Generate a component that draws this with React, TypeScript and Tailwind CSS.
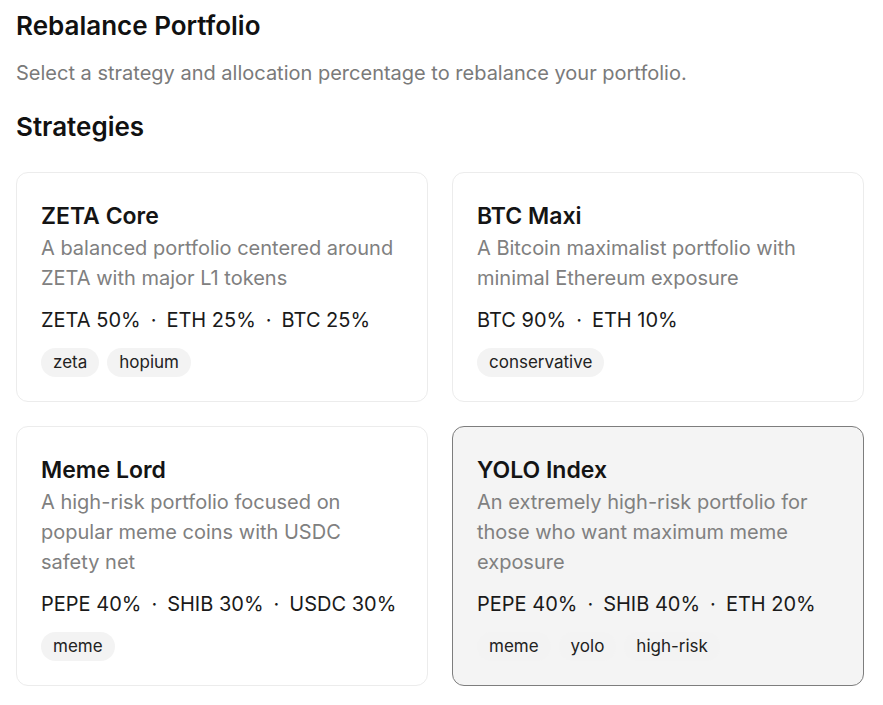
import React from "react";

type Strategy = {
  name: string;
  description: string;
  allocations: string[];
  tags: string[];
  selected?: boolean;
};

const strategies: Strategy[] = [
  {
    name: "ZETA Core",
    description: "A balanced portfolio centered around ZETA with major L1 tokens",
    allocations: ["ZETA 50%", "ETH 25%", "BTC 25%"],
    tags: ["zeta", "hopium"],
  },
  {
    name: "BTC Maxi",
    description: "A Bitcoin maximalist portfolio with minimal Ethereum exposure",
    allocations: ["BTC 90%", "ETH 10%"],
    tags: ["conservative"],
  },
  {
    name: "Meme Lord",
    description: "A high-risk portfolio focused on popular meme coins with USDC safety net",
    allocations: ["PEPE 40%", "SHIB 30%", "USDC 30%"],
    tags: ["meme"],
  },
  {
    name: "YOLO Index",
    description: "An extremely high-risk portfolio for those who want maximum meme exposure",
    allocations: ["PEPE 40%", "SHIB 40%", "ETH 20%"],
    tags: ["meme", "yolo", "high-risk"],
    selected: true,
  },
];

function Card({ s }: { s: Strategy }) {
  return (
    <div
      className={
        s.selected
          ? "rounded-xl border border-[#7d7d7d] bg-[#f4f4f4] px-6 pt-[27px] pb-6 flex flex-col"
          : "rounded-xl border border-[#ececec] bg-white px-6 pt-[27px] pb-6 flex flex-col"
      }
    >
      <div className="text-[23px] leading-[32px] font-semibold text-[#141414]">{s.name}</div>
      <div className="mt-[1px] text-[20px] leading-[30px] text-[#808080]">{s.description}</div>
      <div className="mt-[13px] text-[20px] leading-[28px] text-[#1a1a1a] whitespace-nowrap">
        {s.allocations.map((a, i) => (
          <React.Fragment key={a}>
            {i > 0 && <span className="mx-[10px]">·</span>}
            {a}
          </React.Fragment>
        ))}
      </div>
      <div className="mt-[14px] flex gap-2">
        {s.tags.map((t) => (
          <span
            key={t}
            className="rounded-full bg-[#f3f3f3] px-3 py-1 text-[17px] leading-[21px] text-[#222]"
          >
            {t}
          </span>
        ))}
      </div>
    </div>
  );
}

export default function App() {
  return (
    <div
      className="w-[880px] bg-white px-4 pt-[10px] pb-6"
      style={{ fontFamily: "Inter, 'Noto Sans', sans-serif" }}
    >
      <h1 className="text-[26px] leading-[32px] font-semibold text-[#111]">Rebalance Portfolio</h1>
      <p className="mt-[17px] text-[20px] leading-[28px] text-[#7a7a7a]">
        Select a strategy and allocation percentage to rebalance your portfolio.
      </p>
      <h2 className="mt-[24px] text-[26px] leading-[32px] font-semibold text-[#111]">Strategies</h2>
      <div className="mt-[29px] grid grid-cols-2 gap-6">
        {strategies.map((s) => (
          <Card key={s.name} s={s} />
        ))}
      </div>
    </div>
  );
}
